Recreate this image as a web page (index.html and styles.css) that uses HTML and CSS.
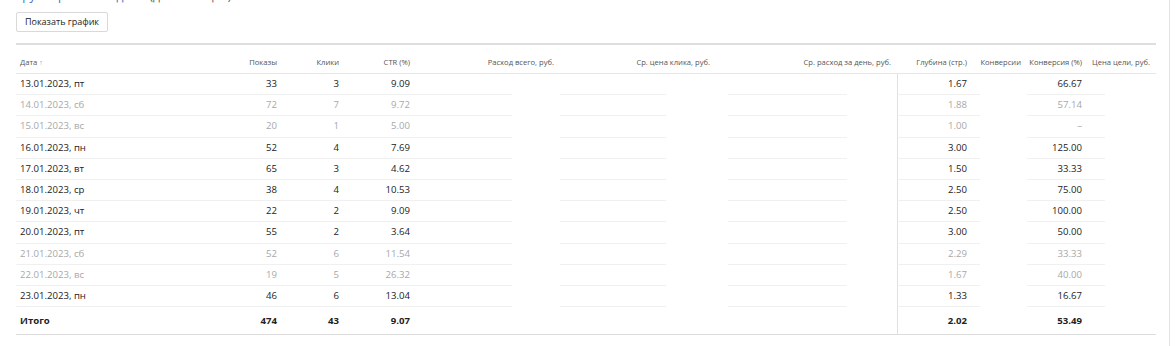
FILE: index.html
```html
<!DOCTYPE html>
<html lang="ru">
<head>
<meta charset="utf-8">
<title>Отчёт</title>
<link rel="stylesheet" href="styles.css">
</head>
<body>
<div class="page">
  <div class="crumbs"><a class="link">Группировка: по дням</a> <span class="muted">(детализация)</span></div>
  <div class="toolbar"><button class="btn">Показать график</button></div>
  <table class="report">
    <colgroup>
      <col class="c-date"><col class="c-shows"><col class="c-clicks"><col class="c-ctr"><col class="c-cost"><col class="c-cpc"><col class="c-day"><col class="c-depth"><col class="c-conv"><col class="c-convp"><col class="c-goal">
    </colgroup>
    <thead>
      <tr>
        <th class="left">Дата <span class="arrow">↑</span></th>
        <th>Показы</th>
        <th>Клики</th>
        <th>CTR (%)</th>
        <th>Расход всего, руб.</th>
        <th>Ср. цена клика, руб.</th>
        <th>Ср. расход за день, руб.</th>
        <th>Глубина (стр.)</th>
        <th>Конверсии</th>
        <th>Конверсия (%)</th>
        <th>Цена цели, руб.</th>
      </tr>
    </thead>
    <tbody>
      <tr><td class="left">13.01.2023, пт</td><td>33</td><td>3</td><td>9.09</td><td class="e5"></td><td class="e6"></td><td class="e7"></td><td class="sep">1.67</td><td class="e9"></td><td>66.67</td><td class="e11"></td></tr>
      <tr class="off"><td class="left">14.01.2023, сб</td><td>72</td><td>7</td><td>9.72</td><td class="e5"></td><td class="e6"></td><td class="e7"></td><td class="sep">1.88</td><td class="e9"></td><td>57.14</td><td class="e11"></td></tr>
      <tr class="off"><td class="left">15.01.2023, вс</td><td>20</td><td>1</td><td>5.00</td><td class="e5"></td><td class="e6"></td><td class="e7"></td><td class="sep">1.00</td><td class="e9"></td><td>–</td><td class="e11"></td></tr>
      <tr><td class="left">16.01.2023, пн</td><td>52</td><td>4</td><td>7.69</td><td class="e5"></td><td class="e6"></td><td class="e7"></td><td class="sep">3.00</td><td class="e9"></td><td>125.00</td><td class="e11"></td></tr>
      <tr><td class="left">17.01.2023, вт</td><td>65</td><td>3</td><td>4.62</td><td class="e5"></td><td class="e6"></td><td class="e7"></td><td class="sep">1.50</td><td class="e9"></td><td>33.33</td><td class="e11"></td></tr>
      <tr><td class="left">18.01.2023, ср</td><td>38</td><td>4</td><td>10.53</td><td class="e5"></td><td class="e6"></td><td class="e7"></td><td class="sep">2.50</td><td class="e9"></td><td>75.00</td><td class="e11"></td></tr>
      <tr><td class="left">19.01.2023, чт</td><td>22</td><td>2</td><td>9.09</td><td class="e5"></td><td class="e6"></td><td class="e7"></td><td class="sep">2.50</td><td class="e9"></td><td>100.00</td><td class="e11"></td></tr>
      <tr><td class="left">20.01.2023, пт</td><td>55</td><td>2</td><td>3.64</td><td class="e5"></td><td class="e6"></td><td class="e7"></td><td class="sep">3.00</td><td class="e9"></td><td>50.00</td><td class="e11"></td></tr>
      <tr class="off"><td class="left">21.01.2023, сб</td><td>52</td><td>6</td><td>11.54</td><td class="e5"></td><td class="e6"></td><td class="e7"></td><td class="sep">2.29</td><td class="e9"></td><td>33.33</td><td class="e11"></td></tr>
      <tr class="off"><td class="left">22.01.2023, вс</td><td>19</td><td>5</td><td>26.32</td><td class="e5"></td><td class="e6"></td><td class="e7"></td><td class="sep">1.67</td><td class="e9"></td><td>40.00</td><td class="e11"></td></tr>
      <tr><td class="left">23.01.2023, пн</td><td>46</td><td>6</td><td>13.04</td><td class="e5"></td><td class="e6"></td><td class="e7"></td><td class="sep">1.33</td><td class="e9"></td><td>16.67</td><td class="e11"></td></tr>
    </tbody>
    <tfoot>
      <tr><td class="left">Итого</td><td>474</td><td>43</td><td>9.07</td><td></td><td></td><td></td><td class="sep">2.02</td><td></td><td>53.49</td><td></td></tr>
    </tfoot>
  </table>
</div>
</body>
</html>
```

FILE: styles.css
```css
html, body {
  margin: 0;
  padding: 0;
  background: #fff;
}
body {
  font-family: "Open Sans", "Noto Sans", sans-serif;
  color: #222;
}
.page {
  width: 1170px;
  height: 346px;
  box-sizing: border-box;
  border-right: 1px solid #e3e3e3;
  overflow: hidden;
}
.crumbs {
  height: 4px;
  overflow: hidden;
  padding-left: 16px;
  font-size: 12px;
  line-height: 14px;
}
.crumbs .link, .crumbs .muted {
  display: inline-block;
  margin-top: -11px;
  vertical-align: top;
}
.link { color: #3d6bc6; }
.muted { color: #666; }
.toolbar {
  padding: 8px 0 0 16px;
  height: 31px;
  box-sizing: border-box;
}
.btn {
  display: block;
  height: 20px;
  width: 92px;
  padding: 0;
  border: 1px solid #d9d9d9;
  border-radius: 2px;
  background: #fff;
  font-family: "Open Sans", "Noto Sans", sans-serif;
  font-size: 9px;
  color: #222;
  line-height: 18px;
}
.report {
  margin: 8px 0 0 16px;
  width: 1140px;
  table-layout: fixed;
  border-collapse: separate;
  border-spacing: 0;
  border-top: 2px solid #dedede;
}
.c-date { width: 214px; }
.c-shows { width: 53px; }
.c-clicks { width: 62px; }
.c-ctr { width: 71px; }
.c-cost { width: 144px; }
.c-cpc { width: 156px; }
.c-day { width: 181px; }
.c-depth { width: 76px; }
.c-conv { width: 54px; }
.c-convp { width: 61px; }
.c-goal { width: 68px; }

.report th {
  height: 23px;
  padding: 0 6px 5px 0;
  vertical-align: bottom;
  text-align: right;
  font-weight: normal;
  font-size: 7.6px;
  line-height: 11px;
  color: #555;
  white-space: nowrap;
  border-bottom: 1px solid #e6e6e6;
}
.report th.left, .report td.left {
  text-align: left;
  padding-left: 4px;
}
.arrow { font-size: 7px; color: #888; }

.report td {
  height: 20.2px;
  padding: 0 6px 0 0;
  text-align: right;
  font-size: 9.6px;
  line-height: 12px;
  white-space: nowrap;
  border-bottom: 1px solid #f0f0f0;
  vertical-align: middle;
}
.report tbody tr.off td { color: #a8a8a8; }
.report td.sep { border-left: 1px solid #e0e0e0; }

.report tbody td.e5, .report tbody td.e6, .report tbody td.e7,
.report tbody td.e9, .report tbody td.e11 {
  border-bottom: 1px solid transparent;
  background-image: linear-gradient(#f0f0f0, #f0f0f0);
  background-repeat: no-repeat;
  background-origin: border-box;
  background-clip: border-box;
}
.report td.e5 { background-size: 96px 1px; background-position: 0 100%; }
.report td.e6 { background-size: 106px 1px; background-position: 0 100%; }
.report td.e7 { background-size: 119px 1px; background-position: 12px 100%; }
.report td.e9 { background-size: 7px 1px; background-position: 0 100%; }
.report td.e11 { background-size: 17px 1px; background-position: 0 100%; }

.report tfoot td {
  height: 27px;
  font-weight: bold;
  color: #222;
  border-bottom: 1px solid #dcdcdc;
}
```
